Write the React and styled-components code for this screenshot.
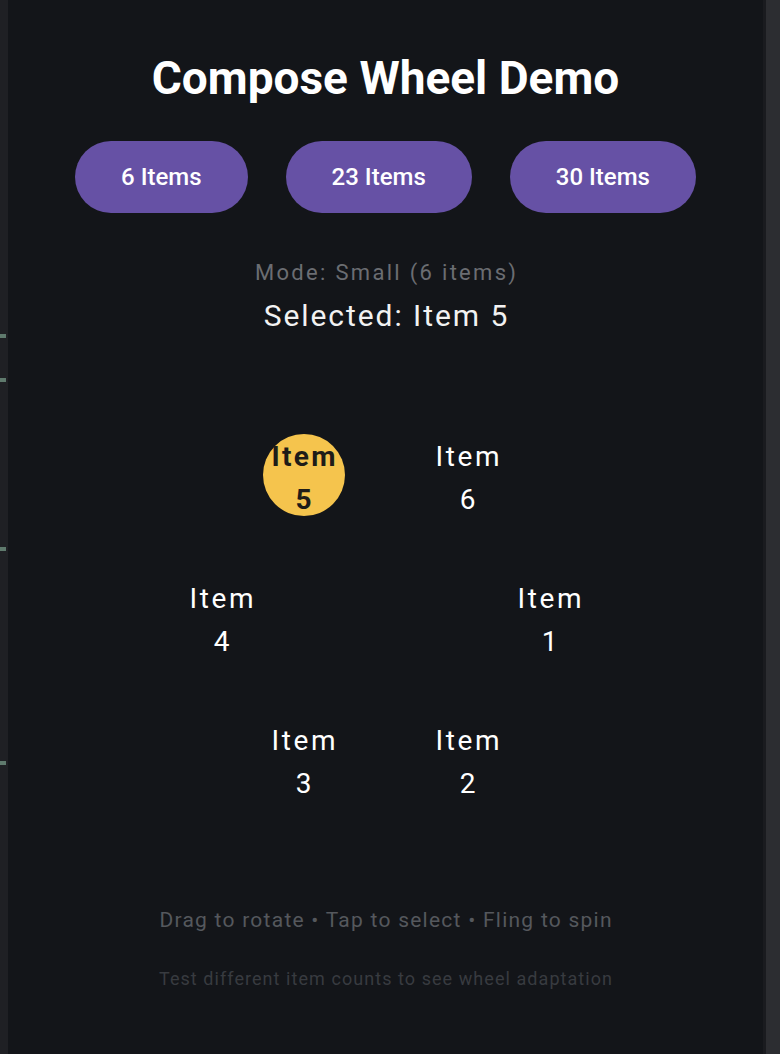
import React, { useState } from "react";
import styled, { createGlobalStyle } from "styled-components";

const GlobalStyle = createGlobalStyle`
  html, body { margin: 0; padding: 0; background: #131519; }
  body { font-family: Roboto, "Noto Sans", "Liberation Sans", sans-serif; }
  * { box-sizing: border-box; }
`;

const Page = styled.div`
  display: flex;
  width: 780px;
  height: 1054px;
  overflow: hidden;
`;

const LeftRail = styled.div`
  width: 8px;
  flex: none;
  background: #1f2024;
  display: flex;
  flex-direction: column;
`;

const Tick = styled.div`
  width: 6px;
  height: 4px;
  background: #5f7a6d;
  margin-top: ${(p) => p.$gap}px;
`;

const RightRail = styled.div`
  width: 17px;
  flex: none;
  background: #2c2d31;
  border-left: 3px solid #1a1b1f;
`;

const Main = styled.main`
  flex: 1;
  background: #131519;
  display: flex;
  flex-direction: column;
  align-items: center;
`;

const Title = styled.h1`
  margin: 52px 0 0;
  font-size: 46px;
  line-height: 52px;
  font-weight: 700;
  color: #ffffff;
`;

const ButtonRow = styled.div`
  display: flex;
  gap: 38px;
  margin-top: 37px;
`;

const ModeButton = styled.button`
  height: 72px;
  padding: 0 46px;
  border: none;
  border-radius: 36px;
  background: #6651a5;
  color: #ffffff;
  font-family: Roboto, sans-serif;
  font-size: 24px;
  font-weight: 500;
  cursor: pointer;
`;

const ModeText = styled.div`
  margin-top: 45px;
  font-size: 22px;
  line-height: 30px;
  letter-spacing: 2.3px;
  padding-left: 2.3px;
  color: #6b6d72;
`;

const SelectedText = styled.div`
  margin-top: 8px;
  font-size: 30px;
  line-height: 40px;
  letter-spacing: 1.95px;
  padding-left: 1.95px;
  color: #f2f2f2;
`;

const WheelArea = styled.div`
  position: relative;
  width: 440px;
  height: 440px;
  margin-top: 61px;
`;

const Node = styled.div`
  position: absolute;
  width: 82px;
  height: 82px;
  margin: -41px 0 0 -41px;
  padding-top: 6px;
  border-radius: 50%;
  background: ${(p) => (p.$active ? "#f5c44d" : "transparent")};
  display: flex;
  flex-direction: column;
  align-items: center;
  justify-content: center;
  cursor: pointer;
`;

const NodeLine = styled.span`
  display: block;
  font-size: 28px;
  line-height: 43px;
  letter-spacing: ${(p) => (p.$active ? "2.3px" : "2.6px")};
  padding-left: ${(p) => (p.$active ? "2.3px" : "2.6px")};
  font-weight: ${(p) => (p.$active ? 700 : 400)};
  color: ${(p) => (p.$active ? "#1e1c18" : "#ffffff")};
  white-space: nowrap;
`;

const Hint = styled.div`
  margin-top: 69px;
  font-size: 21px;
  line-height: 28px;
  letter-spacing: 1.25px;
  padding-left: 1.25px;
  color: #55585d;
`;

const SubHint = styled.div`
  margin-top: 33px;
  font-size: 18px;
  line-height: 24px;
  letter-spacing: 1.06px;
  padding-left: 1.06px;
  color: #383b40;
`;

const MODES = [
  { count: 6, label: "Small" },
  { count: 23, label: "Medium" },
  { count: 30, label: "Large" },
];

export default function App() {
  const [mode, setMode] = useState(MODES[0]);
  const [selected, setSelected] = useState(5);
  const count = mode.count;
  const radius = 164;
  const items = Array.from({ length: count }, (_, i) => {
    const angle = (i * 2 * Math.PI) / count;
    return {
      n: i + 1,
      x: 220 + radius * Math.cos(angle),
      y: 220 + radius * Math.sin(angle),
    };
  });

  return (
    <>
      <GlobalStyle />
      <Page>
        <LeftRail>
          <Tick $gap={334} />
          <Tick $gap={40} />
          <Tick $gap={165} />
          <Tick $gap={210} />
        </LeftRail>
        <Main>
          <Title>Compose Wheel Demo</Title>
          <ButtonRow>
            {MODES.map((m) => (
              <ModeButton key={m.count} onClick={() => { setMode(m); setSelected(1); }}>
                {m.count} Items
              </ModeButton>
            ))}
          </ButtonRow>
          <ModeText>
            Mode: {mode.label} ({mode.count} items)
          </ModeText>
          <SelectedText>Selected: Item {selected}</SelectedText>
          <WheelArea>
            {items.map((it) => (
              <Node
                key={it.n}
                $active={it.n === selected}
                style={{ left: it.x, top: it.y }}
                onClick={() => setSelected(it.n)}
              >
                <NodeLine $active={it.n === selected}>Item</NodeLine>
                <NodeLine $active={it.n === selected}>{it.n}</NodeLine>
              </Node>
            ))}
          </WheelArea>
          <Hint>Drag to rotate • Tap to select • Fling to spin</Hint>
          <SubHint>Test different item counts to see wheel adaptation</SubHint>
        </Main>
        <RightRail />
      </Page>
    </>
  );
}
